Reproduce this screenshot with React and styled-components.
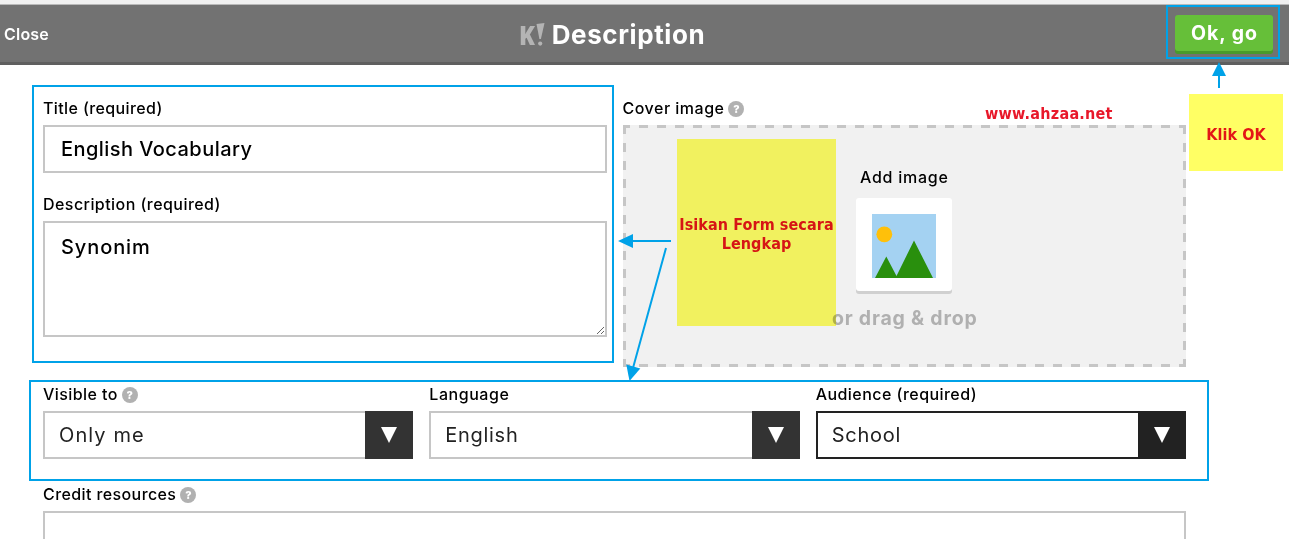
import React from 'react';
import styled, { createGlobalStyle, css } from 'styled-components';

const annotationBlue = '#00a2e8';
const fieldBorder = '#c6c6c6';

const GlobalStyle = createGlobalStyle`
    * { box-sizing: border-box; }
    body {
        margin: 0;
        background: #fff;
        color: #000;
        font-family: Inter, "Open Sans", sans-serif;
        overflow: hidden;
    }
`;

const Page = styled.div`
    position: relative;
    width: 1289px;
    height: 539px;
    overflow: hidden;
`;

const TopStrip = styled.div`
    height: 5px;
    background: #f0f0f0;
    border-bottom: 1px solid #b9b9b9;
`;

const Header = styled.header`
    display: grid;
    grid-template-columns: 1fr auto 1fr;
    align-items: center;
    height: 60px;
    padding: 0 16px 0 4px;
    background: #727272;
    border-bottom: 3px solid #5f5f5f;
    color: #fff;
`;

const CloseLink = styled.a`
    font-size: 16px;
    font-weight: 600;
    line-height: 20px;
    letter-spacing: 0.2px;
    padding-top: 1px;
`;

const HeaderTitle = styled.h1`
    display: flex;
    align-items: center;
    gap: 7px;
    margin: 3px 0 0 -52px;
    font-size: 26px;
    font-weight: 700;
    line-height: 30px;
    letter-spacing: 0.6px;
`;

const OkButton = styled.button`
    justify-self: end;
    width: 98px;
    height: 36px;
    margin-bottom: 1px;
    padding: 1px 0 0 1px;
    border: 0;
    border-radius: 3px;
    background: #66bf39;
    box-shadow: 0 3px 0 #4a9a2b;
    color: #fff;
    font: 700 19.5px/35px Inter, sans-serif;
    letter-spacing: 0.95px;
`;

const Form = styled.form`
    width: 1143px;
    margin: 30px 0 0 43px;
`;

const Row = styled.div`
    display: grid;
    grid-template-columns: repeat(${({ $cols }) => $cols}, 1fr);
    column-gap: 16px;
    margin-bottom: ${({ $gap }) => $gap}px;
`;

const Column = styled.div`
    display: flex;
    flex-direction: column;
    gap: 18px;
`;

const Field = styled.div`
    min-width: 0;
`;

const Label = styled.label`
    display: flex;
    align-items: center;
    gap: 4px;
    height: 30px;
    padding-bottom: 3px;
    font-size: 16px;
    font-weight: 500;
    line-height: 27px;
    letter-spacing: ${({ $ls }) => $ls}px;
    white-space: nowrap;
`;

const HelpIcon = styled.span`
    width: 16px;
    height: 16px;
    margin-top: 1px;
    border-radius: 50%;
    background: #b1b1b1;
    color: #fff;
    font-size: 11px;
    font-weight: 800;
    line-height: 16px;
    letter-spacing: 0;
    text-align: center;
`;

const inputStyle = css`
    display: block;
    width: 100%;
    border: 2px solid ${fieldBorder};
    border-radius: 0;
    outline: 0;
    background: #fff;
    color: #000;
    font: 450 20px/24px Inter, sans-serif;
    letter-spacing: ${({ $ls }) => $ls}px;
`;

const Input = styled.input`
    ${inputStyle}
    height: 48px;
    padding: 0 16px;
`;

const TextArea = styled.textarea`
    ${inputStyle}
    height: 116px;
    padding: 12px 16px;
    resize: both;
`;

const Select = styled.div`
    display: flex;
    justify-content: space-between;
    height: 48px;
    border: 2px solid ${({ $active }) => ($active ? '#222' : fieldBorder)};
    color: #222;
    font-size: 20px;
    line-height: 44px;
    letter-spacing: ${({ $ls }) => $ls}px;
    padding-left: 14px;
`;

const SelectArrow = styled.span`
    display: flex;
    align-items: center;
    justify-content: center;
    width: 48px;
    height: 48px;
    margin: -2px -2px 0 0;
    background: ${({ $active }) => ($active ? '#222' : '#333')};
`;

// 9px dashes on an 18px period, drawn along each of the four edges
const dashX = 'repeating-linear-gradient(90deg, #c6c6c6 0 9px, transparent 9px 18px)';
const dashY = 'repeating-linear-gradient(180deg, #c6c6c6 0 9px, transparent 9px 18px)';

const DropZone = styled.div`
    display: flex;
    flex-direction: column;
    align-items: center;
    height: 242px;
    padding-top: 42px;
    background:
        ${dashX} -2px 0 / calc(100% + 2px) 3px no-repeat,
        ${dashX} -2px 100% / calc(100% + 2px) 3px no-repeat,
        ${dashY} 0 0 / 3px 100% no-repeat,
        ${dashY} 100% 0 / 3px 100% no-repeat,
        #f1f1f1;
`;

const AddImage = styled.span`
    font-size: 16px;
    font-weight: 500;
    line-height: 21px;
    letter-spacing: 0.75px;
`;

const ImageCard = styled.div`
    width: 96px;
    height: 93px;
    margin-top: 10px;
    padding: 16px;
    border-radius: 3px;
    background: #fff;
    box-shadow: 0 3px 0 #d0d0d0;
`;

const DragHint = styled.span`
    margin: 15px 0 0 1px;
    color: #b0b0b0;
    font-size: 19.5px;
    font-weight: 700;
    line-height: 24px;
    letter-spacing: 0.8px;
`;

const Highlight = styled.div`
    position: absolute;
    left: ${({ $x }) => $x}px;
    top: ${({ $y }) => $y}px;
    width: ${({ $w }) => $w}px;
    height: ${({ $h }) => $h}px;
    border: 2px solid ${annotationBlue};
    pointer-events: none;
`;

const Note = styled.div`
    position: absolute;
    display: flex;
    align-items: center;
    justify-content: center;
    left: ${({ $x }) => $x}px;
    top: ${({ $y }) => $y}px;
    width: ${({ $w }) => $w}px;
    height: ${({ $h }) => $h}px;
    padding-top: 3px;
    background: #ffff64;
    mix-blend-mode: multiply;
    color: #e31616;
    font: 700 16px/19px "DejaVu Sans Condensed", "DejaVu Sans", sans-serif;
    font-stretch: condensed;
    letter-spacing: 0.08px;
    text-align: center;
    white-space: pre;
`;

const Watermark = styled.span`
    position: absolute;
    left: 985px;
    top: 104px;
    color: #e8182a;
    font: 700 16px/20px "DejaVu Sans Condensed", "DejaVu Sans", sans-serif;
    font-stretch: condensed;
    letter-spacing: 0.25px;
`;

const Arrows = styled.svg`
    position: absolute;
    left: 0;
    top: 0;
    pointer-events: none;
`;

const Logo = () => (
    <svg width="25" height="28" viewBox="0 -2 25 28" fill="#b4b4b4" overflow="visible">
        <text x="-1" y="22" fontFamily="Open Sans" fontWeight="800" fontSize="27" letterSpacing="0" textLength="16" lengthAdjust="spacingAndGlyphs">K</text>
        <path d="M16.5 1l8-1-3.6 16h-1.5z" />
        <circle cx="20.2" cy="20.6" r="2.1" />
    </svg>
);

const Picture = () => (
    <svg width="64" height="64" viewBox="0 0 64 64" display="block">
        <rect width="64" height="64" fill="#a4d2f2" />
        <circle cx="12.3" cy="20.3" r="7.9" fill="#ffc00a" />
        <path d="M3 64l11.3-21.5L24.5 62 42 26.5 61 64z" fill="#298f0d" />
    </svg>
);

const SelectField = ({ label, help, value, ls, labelLs, active }) => (
    <Field>
        <Label $ls={labelLs}>{label}{help && <HelpIcon>?</HelpIcon>}</Label>
        <Select $ls={ls} $active={active}>
            {value}
            <SelectArrow $active={active}>
                <svg width="16" height="16" viewBox="0 0 16 16"><path d="M0 0h16L8 16z" fill="#fff" /></svg>
            </SelectArrow>
        </Select>
    </Field>
);

const App = () => (
    <Page>
        <GlobalStyle />
        <TopStrip />
        <Header>
            <CloseLink>Close</CloseLink>
            <HeaderTitle><Logo />Description</HeaderTitle>
            <OkButton type="button">Ok, go</OkButton>
        </Header>
        <Form>
            <Row $cols={2} $gap={14}>
                <Column>
                    <Field>
                        <Label $ls={0.38}>Title (required)</Label>
                        <Input $ls={0.45} defaultValue="English Vocabulary" />
                    </Field>
                    <Field>
                        <Label $ls={0.44}>Description (required)</Label>
                        <TextArea $ls={0.9} defaultValue="Synonim" spellCheck={false} />
                    </Field>
                </Column>
                <Field>
                    <Label $ls={0.5}>Cover image<HelpIcon>?</HelpIcon></Label>
                    <DropZone>
                        <AddImage>Add image</AddImage>
                        <ImageCard><Picture /></ImageCard>
                        <DragHint>or drag &amp; drop</DragHint>
                    </DropZone>
                </Field>
            </Row>
            <Row $cols={3} $gap={22}>
                <SelectField label="Visible to" help value="Only me" ls={1.1} labelLs={0.42} />
                <SelectField label="Language" value="English" ls={0.7} labelLs={0.54} />
                <SelectField label="Audience (required)" value="School" ls={0.75} labelLs={0.45} active />
            </Row>
            <Field>
                <Label $ls={0.4}>Credit resources<HelpIcon>?</HelpIcon></Label>
                <Input as="div" />
            </Field>
        </Form>

        <Watermark>www.ahzaa.net</Watermark>
        <Note $x={677} $y={139} $w={159} $h={187}>{'Isikan Form secara\nLengkap'}</Note>
        <Note $x={1189} $y={94} $w={94} $h={77}>Klik OK</Note>
        <Highlight $x={32} $y={85} $w={582} $h={278} />
        <Highlight $x={29} $y={380} $w={1180} $h={101} />
        <Highlight $x={1166} $y={5} $w={114} $h={54} />
        <Arrows width="1289" height="539" viewBox="0 0 1289 539" fill={annotationBlue} stroke="none">
            <path d="M671 241H630M666 248L633 368M1219 88V74" stroke={annotationBlue} strokeWidth="2" />
            <path d="M618 241l15-7v14z" />
            <path d="M629.5 381l-3.2-16.5 14 4z" />
            <path d="M1219 62l7 14h-14z" />
        </Arrows>
    </Page>
);

export default App;
